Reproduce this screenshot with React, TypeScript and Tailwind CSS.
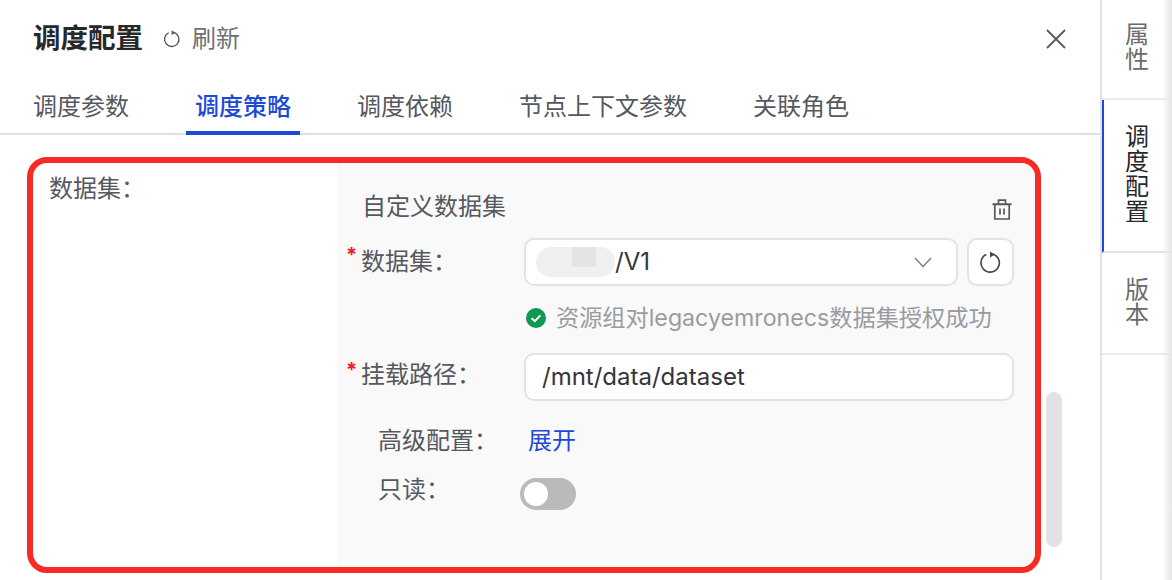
import React from "react";

const font = { fontFamily: '"Inter", "Noto Sans CJK SC", sans-serif' };

function Redo({ size, color, sw }: { size: number; color: string; sw: number }) {
  return (
    <svg width={size} height={size} viewBox="0 0 24 24" fill="none" stroke={color} strokeWidth={sw}>
      <path d="M15.5 3.6 A9.6 9.6 0 1 1 7 4" strokeLinecap="round" />
      <path d="M11.5 0.4 L16.6 3.6 L11.5 6.8 Z" fill={color} stroke="none" />
    </svg>
  );
}

function Req() {
  return <span className="w-[15px] text-[#ee1c25] text-[20px] leading-[24px] font-bold pt-[5px] shrink-0">*</span>;
}

export default function App() {
  const tabs = ["调度参数", "调度策略", "调度依赖", "节点上下文参数", "关联角色"];
  return (
    <div style={font} className="relative w-[1172px] h-[580px] flex overflow-hidden bg-white text-[24px] text-[#55585f]">
      <div className="w-[1100px] flex flex-col shrink-0">
        <header className="h-[78px] flex items-center pl-[33px] pr-[34px]">
          <h1 className="text-[27.5px] font-bold text-[#26282c] leading-none">调度配置</h1>
          <span className="ml-[20px] mr-[11px] flex"><Redo size={18} color="#55585f" sw={1.8} /></span>
          <span className="text-[#6d7075]">刷新</span>
          <svg className="ml-auto" width="20" height="20" viewBox="0 0 20 20" stroke="#55585f" strokeWidth="1.8" fill="none">
            <path d="M1 1 L19 19 M19 1 L1 19" />
          </svg>
        </header>
        <nav className="h-[57px] shrink-0 flex gap-[48px] pl-[24px] border-b-2 border-[#dfdfe4]">
          {tabs.map((t, i) => (
            <div
              key={t}
              className={
                i === 1
                  ? "h-[57px] px-[9px] pt-[12px] leading-[34px] font-medium text-[#1d49d8] border-b-4 border-[#1d49d8]"
                  : "h-[55px] px-[9px] pt-[12px] leading-[34px] text-[#55585f]"
              }
            >
              {t}
            </div>
          ))}
        </nav>
        <main className="flex-1 pl-[27px] pt-[22px]">
          <section className="w-[1014px] h-[416px] border-[6px] border-[#f52b24] rounded-[20px] overflow-hidden flex">
            <div className="w-[304px] pl-[16px] pt-[9px] leading-[34px]">数据集：</div>
            <div className="flex-1 bg-[#f9f9f9] pl-[9px] pr-[21px] flex flex-col">
              <div className="h-[75px] pt-[27px] pl-[16px] pr-[2px] flex justify-between leading-[34px]">
                <span>自定义数据集</span>
                <svg className="mt-[9px]" width="20" height="21" viewBox="0 0 20 21" fill="none" stroke="#55585f" strokeWidth="1.7">
                  <path d="M0.5 5.2 H19.5" strokeWidth="2" />
                  <path d="M6.5 5 V1.2 H13.5 V5" />
                  <path d="M2.8 5 V20 H17.2 V5" />
                  <path d="M8 9.5 V15.5 M12 9.5 V15.5" />
                </svg>
              </div>
              <div className="h-[48px] flex shrink-0">
                <Req />
                <label className="w-[163px] pl-[0px] leading-[48px]">数据集：</label>
                <div className="w-[434px] h-[48px] bg-white border-2 border-[#e3e3e3] rounded-[10px] flex items-center pl-[10px] pr-[24px] text-[#33353a]">
                  <span className="relative w-[79px] h-[30px] rounded-full bg-[#efefef] overflow-hidden shrink-0">
                    <span className="absolute left-[36px] top-0 w-[24px] h-[20px] bg-[#e4e4e4]"></span>
                  </span>
                  <span className="leading-none">/V1</span>
                  <svg className="ml-auto" width="18" height="11" viewBox="0 0 18 11" fill="none" stroke="#87898e" strokeWidth="1.7">
                    <path d="M1 1 L9 9.5 L17 1" />
                  </svg>
                </div>
                <button className="ml-[9px] w-[47px] h-[48px] bg-white border-2 border-[#e3e3e3] rounded-[10px] flex items-center justify-center">
                  <Redo size={23} color="#44474d" sw={1.7} />
                </button>
              </div>
              <div className="h-[67px] pl-[180px] pt-[15px] flex text-[#999ba1] text-[23.2px] leading-[34px] whitespace-nowrap shrink-0">
                <svg className="mt-[7px] mr-[10px] shrink-0" width="20" height="20" viewBox="0 0 20 20">
                  <circle cx="10" cy="10" r="10" fill="#0f9950" />
                  <path d="M5.6 10.2 L8.8 13.2 L14.4 7.4" fill="none" stroke="white" strokeWidth="2" />
                </svg>
                <span>资源组对legacyemronecs数据集授权成功</span>
              </div>
              <div className="h-[48px] flex shrink-0">
                <Req />
                <label className="w-[163px] leading-[44px]">挂载路径：</label>
                <div className="w-[490px] h-[48px] bg-white border-2 border-[#e3e3e3] rounded-[10px] flex items-center pl-[16px] text-[#33353a]">
                  /mnt/data/dataset
                </div>
              </div>
              <div className="h-[65px] pl-[32px] pt-[23px] flex leading-[34px] shrink-0">
                <label className="w-[146px] h-[34px] shrink-0">高级配置：</label>
                <span className="pl-[4px] text-[#1d49d8]">展开</span>
              </div>
              <div className="pl-[32px] pt-[7px] flex leading-[34px]">
                <label className="w-[142px] shrink-0">只读：</label>
                <span className="mt-[5px] w-[56px] h-[32px] rounded-full bg-[#bababa] pl-[4px] pt-[4px]">
                  <span className="block w-[24px] h-[24px] rounded-full bg-white"></span>
                </span>
              </div>
            </div>
          </section>
        </main>
      </div>
      <aside className="w-[72px] shrink-0 border-l-2 border-[#e3e3e3] flex flex-col text-[24px] leading-[25px] text-[#6b6b6b]">
        <div className="h-[100px] border-b-2 border-[#ebebeb] flex flex-col items-center pt-[22px] pr-[0px]">
          <span>属</span><span>性</span>
        </div>
        <div className="h-[153px] border-b-2 border-[#e3e3e3] border-l-[2px] border-l-[#1d49d8] flex flex-col items-center pt-[24px] pr-[2px] text-[#26282c]">
          <span>调</span><span>度</span><span>配</span><span>置</span>
        </div>
        <div className="h-[102px] border-b-2 border-[#ebebeb] flex flex-col items-center pt-[24px]">
          <span>版</span><span>本</span>
        </div>
      </aside>
      <div className="absolute left-[1046px] top-[392px] w-[16px] h-[155px] rounded-lg bg-[#e1e2e5]"></div>
      <div className="absolute right-0 top-0 w-[10px] h-[580px] bg-gradient-to-r from-transparent to-[#e6e6e6]"></div>
    </div>
  );
}
